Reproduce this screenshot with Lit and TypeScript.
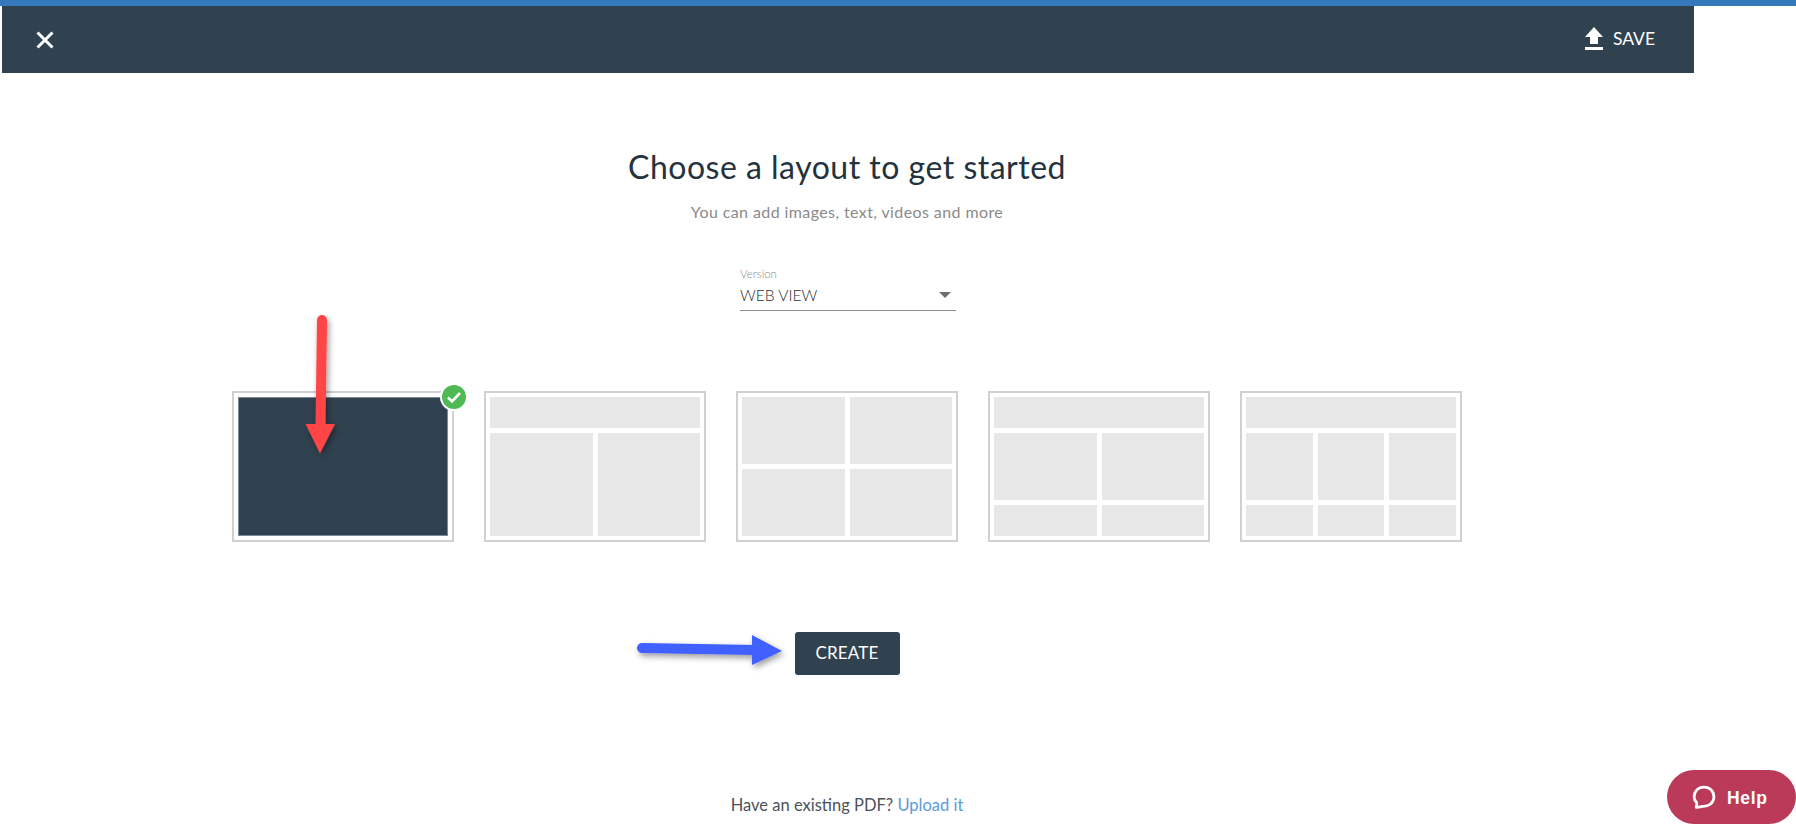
import { LitElement, html, css, nothing } from "lit";
import { customElement } from "lit/decorators.js";

const LAYOUTS: { cols: string; rows: string; cells: number[] }[] = [
  { cols: "1fr", rows: "1fr", cells: [1] },
  { cols: "1fr 1fr", rows: "31fr 103fr", cells: [2, 1, 1] },
  { cols: "1fr 1fr", rows: "1fr 1fr", cells: [1, 1, 1, 1] },
  { cols: "1fr 1fr", rows: "31px 67px 31px", cells: [2, 1, 1, 1, 1] },
  { cols: "1fr 1fr 1fr", rows: "31px 67px 31px", cells: [3, 1, 1, 1, 1, 1, 1] },
];

@customElement("app-root")
export class AppRoot extends LitElement {
  static styles = css`
    :host {
      display: block;
      position: relative;
      height: 840px;
      overflow: hidden;
      background: #fff;
      font-family: Lato, "Noto Sans", sans-serif;
      color: #26333d;
    }
    .topline { height: 6px; background: #3579bd; }
    .shell { width: 1692px; margin-left: 2px; }
    .header {
      height: 67px;
      background: #30424f;
      color: #fff;
      display: flex;
      align-items: center;
      justify-content: space-between;
      padding: 0 39px 0 33px;
    }
    .close { display: block; width: 20px; height: 20px; }
    .save { display: flex; align-items: center; gap: 9px; font-size: 17.5px; margin-top: -2px; }
    .save svg { display: block; width: 20px; height: 23px; }
    .content { width: 1690px; display: flex; flex-direction: column; align-items: center; }
    h1 {
      margin: 72px 0 0;
      font-size: 32px;
      line-height: 44px;
      font-weight: 400;
      letter-spacing: 0.5px;
      color: #24323d;
    }
    .sub { margin-top: 12px; font-size: 16px; line-height: 22px; font-weight: 400; color: #8a8a8a; letter-spacing: 0.4px; }
    .select { width: 216px; margin: 44px 0 0 2px; }
    .select label { display: block; font-size: 11.5px; line-height: 14px; font-weight: 300; color: #8a8a8a; }
    .value {
      display: flex;
      align-items: center;
      justify-content: space-between;
      padding: 0 5px 2px 0;
      box-sizing: border-box;
      height: 30px;
      border-bottom: 1px solid #8c8c8c;
      font-size: 15.5px;
      font-weight: 300;
      color: #2e2e2e;
    }
    .caret { width: 0; height: 0; border: 6px solid transparent; border-top-color: #6f6f6f; border-bottom: 0; }
    .cards { display: flex; gap: 30px; margin-top: 80px; }
    .card {
      position: relative;
      box-sizing: border-box;
      width: 222px;
      height: 151px;
      border: 2px solid #d0d0d0;
      padding: 4px;
      display: grid;
      gap: 5px 5px;
    }
    .cell { background: #e7e7e7; }
    .card.selected .cell { background: #30424f; outline: 1px solid #7c8a95; outline-offset: -1px; }
    .badge { position: absolute; top: -8px; right: -14px; width: 24px; height: 24px; display: block; overflow: visible; }
    .create {
      margin-top: 90px;
      width: 105px;
      height: 43px;
      border-radius: 3px;
      background: #30424f;
      color: #fff;
      display: flex;
      align-items: center;
      justify-content: center;
      font-size: 17px;
      letter-spacing: 0.2px;
      padding-bottom: 2px;
      box-sizing: border-box;
    }
    .foot { margin-top: 119px; font-size: 16.5px; line-height: 22px; font-weight: 400; color: #4a5258; }
    .foot a { color: #5b9bd9; text-decoration: none; }
    .overlay { position: absolute; left: 0; top: 0; width: 1796px; height: 840px; pointer-events: none; }
    .help {
      position: absolute;
      left: 1667px;
      top: 770px;
      width: 129px;
      height: 54px;
      border-radius: 27px;
      background: #bc3a59;
      color: #fff;
      display: flex;
      align-items: center;
      gap: 11px;
      padding-left: 24px;
      box-sizing: border-box;
      font-family: "Liberation Sans", Arial, sans-serif;
      font-weight: 700;
      font-size: 17.5px;
      letter-spacing: 0.7px;
    }
    .help span { margin-top: 3px; }
    .help svg { display: block; width: 25px; height: 25px; }
  `;

  render() {
    return html`
      <div class="topline"></div>
      <div class="shell">
        <header class="header">
          <svg class="close" viewBox="0 0 20 20" fill="none" stroke="#fff" stroke-width="3">
            <path d="M2.5 2.5 17.5 17.5M17.5 2.5 2.5 17.5" />
          </svg>
          <div class="save">
            <svg viewBox="0 0 20 23" fill="#fff">
              <path d="M10 0 19 10H14V17H6V10H1Z" />
              <rect x="1" y="20" width="18" height="3" />
            </svg>
            <span>SAVE</span>
          </div>
        </header>
        <div class="content">
          <h1>Choose a layout to get started</h1>
          <div class="sub">You can add images, text, videos and more</div>
          <div class="select">
            <label>Version</label>
            <div class="value"><span>WEB VIEW</span><span class="caret"></span></div>
          </div>
          <div class="cards">
            ${LAYOUTS.map(
              (l, i) => html`
                <div
                  class="card ${i === 0 ? "selected" : ""}"
                  style="grid-template-columns:${l.cols};grid-template-rows:${l.rows}"
                >
                  ${l.cells.map((span) => html`<div class="cell" style="grid-column:span ${span}"></div>`)}
                  ${i === 0
                    ? html`<svg class="badge" viewBox="0 0 24 24">
                        <circle cx="12" cy="12" r="14" fill="#fff" />
                        <circle cx="12" cy="12" r="12" fill="#4fb953" />
                        <path d="M6 12.5 10 16.5 18 8" fill="none" stroke="#fff" stroke-width="2.6" />
                      </svg>`
                    : nothing}
                </div>
              `
            )}
          </div>
          <div class="create">CREATE</div>
          <div class="foot">Have an existing PDF? <a href="#">Upload it</a></div>
        </div>
      </div>
      <svg class="overlay" viewBox="0 0 1796 840">
        <defs>
          <filter id="sh" x="-30%" y="-30%" width="170%" height="170%">
            <feDropShadow dx="2" dy="3" stdDeviation="3" flood-color="#000" flood-opacity="0.4" />
          </filter>
        </defs>
        <g filter="url(#sh)">
          <path d="M322 320 320.5 426" stroke="#ff4444" stroke-width="10" stroke-linecap="round" fill="none" />
          <path d="M305.5 424H335L320 453.5Z" fill="#ff4444" />
        </g>
        <g filter="url(#sh)">
          <path d="M642 648 756 650" stroke="#4060ff" stroke-width="10" stroke-linecap="round" fill="none" />
          <path d="M752 635 782 651 752 665Z" fill="#4060ff" />
        </g>
      </svg>
      <div class="help">
        <svg viewBox="0 0 24 24" fill="none" stroke="#fff" stroke-width="2.6" stroke-linejoin="round" stroke-linecap="round">
          <path d="M5 21.5 C7 21.5 9 21 11 20.5 C17 21 22 17 22 11.5 C22 6 18 2 12.5 2 C7 2 3 6 3 11.5 C3 13.5 4 15.5 5.5 17 C5.6 18.5 5.4 20 5 21.5Z" />
        </svg>
        <span>Help</span>
      </div>
    `;
  }
}
